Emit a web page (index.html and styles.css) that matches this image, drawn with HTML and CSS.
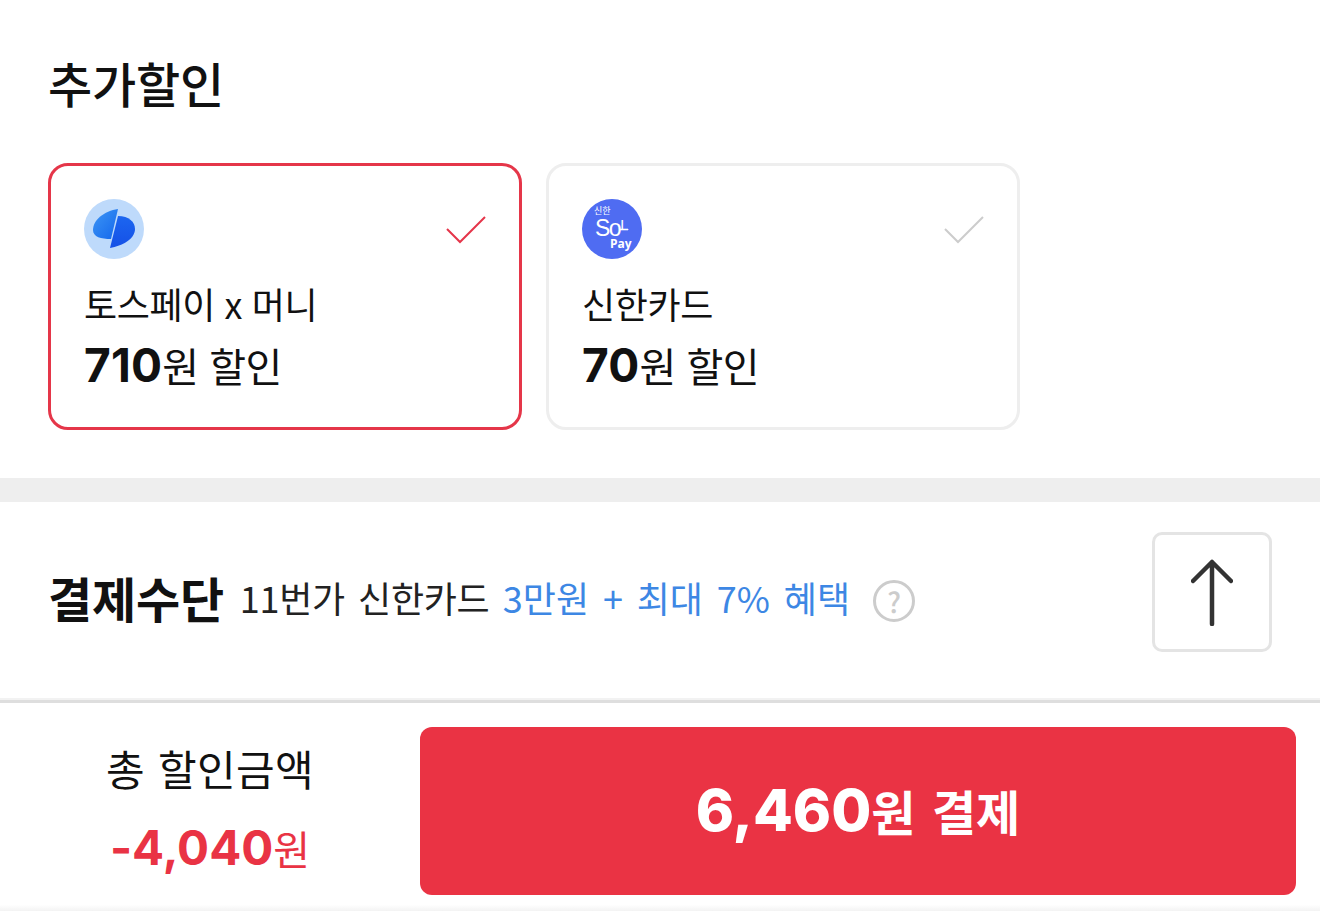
FILE: index.html
```html
<!DOCTYPE html>
<html lang="ko">
<head>
<meta charset="utf-8">
<title>추가할인</title>
<link rel="stylesheet" href="styles.css">
</head>
<body>
<main class="page">
  <section class="discount">
    <h2 class="discount-title">추가할인</h2>
    <div class="cards">
      <article class="card card-active">
        <div class="card-top">
          <svg class="logo" viewBox="0 0 60 60" aria-hidden="true">
            <defs>
              <linearGradient id="tl" x1="0" y1="0" x2="1" y2="1"><stop offset="0" stop-color="#3d96f5"/><stop offset="1" stop-color="#1467ec"/></linearGradient>
              <linearGradient id="tr" x1="0" y1="0" x2="0" y2="1"><stop offset="0" stop-color="#1c66f0"/><stop offset="1" stop-color="#1550e6"/></linearGradient>
            </defs>
            <circle cx="30" cy="30" r="30" fill="#bedafb"/>
            <path d="M34 10C20 12 9 21 9 31C9 38 17 40 27 40Z" fill="url(#tl)"/>
            <path d="M34 17C45 17 51 23 51 30C51 40 38 47 26 49Z" fill="url(#tr)"/>
          </svg>
          <svg class="check" viewBox="0 0 40 28" aria-hidden="true"><path class="check-on" d="M1 13L14 26L39 1"/></svg>
        </div>
        <p class="card-name">토스페이 x 머니</p>
        <p class="card-amount"><b class="num">710</b>원 할인</p>
      </article>
      <article class="card">
        <div class="card-top">
          <svg class="logo" viewBox="0 0 60 60" aria-hidden="true">
            <circle cx="30" cy="30" r="30" fill="#4f6cf2"/>
            <text class="sol-kr" x="12" y="15">신한</text>
            <text class="sol-main" x="13" y="37">So<tspan class="sol-l" dy="-6">L</tspan></text>
            <path class="sol-foot" d="M38 30.5H46"/>
            <text class="sol-pay" x="28" y="49">Pay</text>
          </svg>
          <svg class="check" viewBox="0 0 40 28" aria-hidden="true"><path class="check-off" d="M1 13L14 26L39 1"/></svg>
        </div>
        <p class="card-name">신한카드</p>
        <p class="card-amount"><b class="num">70</b>원 할인</p>
      </article>
    </div>
  </section>
  <div class="divider"></div>
  <section class="payment">
    <h2 class="payment-title">결제수단</h2>
    <p class="payment-promo">11번가 신한카드 <span class="promo-blue">3만원 + 최대 7% 혜택</span></p>
    <span class="help">?</span>
    <button class="top-btn" aria-label="위로">
      <svg class="arrow" viewBox="0 0 42 68" aria-hidden="true"><path d="M21 66V4M2 23L21 4L40 23"/></svg>
    </button>
  </section>
  <footer class="footer">
    <div class="total">
      <p class="total-label">총 할인금액</p>
      <p class="total-value"><b class="num">-4,040</b>원</p>
    </div>
    <button class="pay-btn"><b class="num">6,460</b>원 결제</button>
  </footer>
</main>
</body>
</html>
```
FILE: styles.css
```css
* { box-sizing: border-box; margin: 0; padding: 0; }
html, body { height: 100%; }
body {
  background: #fff;
  color: #111;
  font-family: "Noto Sans CJK KR", "Liberation Sans", sans-serif;
  overflow: hidden;
}
.page { width: 1320px; height: 911px; display: flex; flex-direction: column; }
.num { font-family: "Inter", "Liberation Sans", sans-serif; font-weight: 700; }

.discount { height: 478px; padding: 50px 48px 0; }
.discount-title { font-size: 48px; line-height: 64px; height: 64px; font-weight: 500; letter-spacing: -0.2px; }
.cards { display: flex; gap: 24px; margin-top: 49px; }
.card {
  width: 474px; height: 267px;
  border: 3px solid #eee;
  border-radius: 20px;
  padding: 33px 33px 0;
}
.card-active { border-color: #e53649; }
.card-top { display: flex; justify-content: space-between; align-items: center; height: 60px; }
.logo { width: 60px; height: 60px; display: block; }
.check { width: 40px; height: 28px; display: block; overflow: visible; fill: none; margin-top: 2px; }
.check-on { stroke: #e5354a; stroke-width: 2; }
.check-off { stroke: #ccc; stroke-width: 2; }
.sol-kr { font-size: 9px; fill: #fff; }
.sol-main { font-family: "Liberation Sans", sans-serif; font-size: 23px; fill: #fff; letter-spacing: -1.5px; }
.sol-l { font-size: 15px; }
.sol-foot { stroke: #fff; stroke-width: 1.6; }
.sol-pay { font-family: "Open Sans", sans-serif; font-weight: 700; font-size: 12px; fill: #fff; }
.card-name { font-size: 36px; line-height: 52px; margin-top: 18px; letter-spacing: -0.4px; }
.card-amount { font-size: 40px; line-height: 60px; margin-top: 6px; letter-spacing: -0.5px; }
.card-amount .num { font-size: 46px; letter-spacing: 0.2px; line-height: 1; }

.divider { height: 24px; background: #eee; flex: none; }

.payment {
  height: 201px; flex: none;
  display: flex; align-items: center;
  padding: 0 48px 8px;
  border-bottom: 3px solid #dedede;
  box-shadow: inset 0 -2px 0 #f2f2f2;
}
.payment-title { font-size: 48px; font-weight: 700; letter-spacing: -0.2px; line-height: 64px; color: #111; }
.payment-promo { font-size: 36px; line-height: 52px; margin-left: 16px; letter-spacing: -0.3px; word-spacing: 3.5px; color: #222; }
.promo-blue { color: #3d87e4; letter-spacing: 0.1px; word-spacing: 3.5px; }
.help {
  width: 42px; height: 42px; margin-left: 23px; margin-top: 8px;
  border: 3px solid #ccc; border-radius: 50%;
  color: #ccc; font-size: 28px; line-height: 36px; text-align: center; font-weight: 500;
}
.top-btn {
  width: 120px; height: 120px; margin-left: auto; margin-top: -10px;
  background: #fff; border: 3px solid #e4e4e4; border-radius: 10px;
  display: flex; align-items: center; justify-content: center;
}
.arrow { width: 42px; height: 68px; fill: none; stroke: #333; stroke-width: 4.5; stroke-linecap: round; stroke-linejoin: round; }

.footer { flex: 1; display: flex; padding: 24px 24px 0 0; background: linear-gradient(#fff 97%, #f3f3f3); }
.total { width: 420px; height: 168px; text-align: center; flex: none; }
.total-label { font-size: 42px; line-height: 60px; margin-top: 11px; letter-spacing: 0.3px; word-spacing: 1px; color: #111; }
.total-value { font-size: 40px; line-height: 64px; margin-top: 18px; color: #e93344; }
.total-value .num { font-size: 47.5px; line-height: 1; }
.pay-btn {
  flex: 1; height: 168px; padding-bottom: 2px;
  background: #ea3344; border: 0; border-radius: 12px;
  color: #fff; font-family: inherit; font-size: 48px; font-weight: 700; word-spacing: 3px;
}
.pay-btn .num { font-size: 58px; font-weight: 800; line-height: 1; }
```
